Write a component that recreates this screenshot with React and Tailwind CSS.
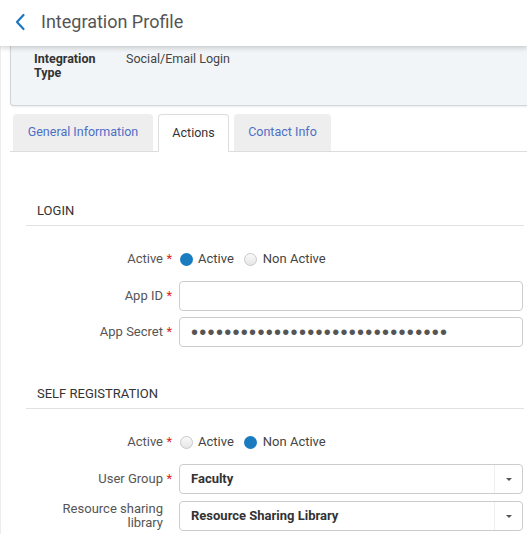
import React from "react";

function Label({ children, required }) {
  return (
    <div className="w-[146px] shrink-0 flex justify-end items-center text-right text-[13px] leading-[14px] text-[#555]">
      <span>{children}</span>
      <span className="w-[9px] pl-[3px] text-[#e0261b] text-[13px]">{required ? "*" : ""}</span>
    </div>
  );
}

function Radio({ checked }) {
  return checked ? (
    <span className="block w-[13px] h-[13px] rounded-full bg-[#1b7bbf] shrink-0" />
  ) : (
    <span className="block w-[13px] h-[13px] rounded-full border border-[#c8c8c8] bg-gradient-to-b from-[#fafafa] to-[#e6e6e6] shrink-0" />
  );
}

function RadioRow({ first, className }) {
  return (
    <div className={"flex h-[24px] items-center " + className}>
      <Label required>Active</Label>
      <div className="ml-[8px] flex items-center text-[13px] text-[#444]">
        <Radio checked={first} />
        <span className="ml-[5px]">Active</span>
        <span className="ml-[10px] flex"><Radio checked={!first} /></span>
        <span className="ml-[6px]">Non Active</span>
      </div>
    </div>
  );
}

function SectionHeading({ children, className }) {
  return (
    <div className={"pl-[11px] pb-[4px] border-b border-[#e2e2e2] text-[13px] leading-[20px] text-[#333] " + className}>
      {children}
    </div>
  );
}

function Select({ value }) {
  return (
    <div className="ml-[7px] w-[344px] h-[30px] border border-[#ccc] rounded-[4px] flex items-center">
      <span className="flex-1 pl-[11px] text-[13px] font-bold text-[#333]">{value}</span>
      <span className="w-[28px] h-full border-l border-[#eee] flex items-center justify-center">
        <span className="w-0 h-0 border-l-[3px] border-r-[3px] border-t-[3px] border-l-transparent border-r-transparent border-t-[#555]" />
      </span>
    </div>
  );
}

export default function App() {
  return (
    <div className="w-[527px] h-[534px] overflow-hidden bg-white relative" style={{ fontFamily: "Roboto, 'Liberation Sans', sans-serif" }}>
      <div className="relative z-10 h-[46px] bg-white shadow-[0_2px_5px_rgba(0,0,0,0.18)] flex items-center">
        <svg className="ml-[14px] -mt-[2px]" width="12" height="18" viewBox="0 0 12 18">
          <path d="M9.5 2 L3 9 L9.5 16" fill="none" stroke="#1d76c2" strokeWidth="2.2" strokeLinecap="round" strokeLinejoin="round" />
        </svg>
        <span className="ml-[15px] -mt-[2px] text-[18px] text-[#555] leading-[22px]">Integration Profile</span>
      </div>
      <div className="border-l border-[#ececec] h-[488px]">
        <div className="ml-[9px] h-[60px] bg-[#f2f5f7] border-l border-b border-[#d2d6d9] rounded-bl-[4px] shadow-[0_1px_2px_rgba(0,0,0,0.08)] flex pt-[6px] pl-[23px]">
          <div className="w-[92px] text-[12.5px] leading-[14px] font-bold text-[#333]">Integration<br />Type</div>
          <div className="text-[12.5px] leading-[14px] text-[#444]">Social/Email Login</div>
        </div>
        <div className="ml-[9px] mt-[8px] flex items-end border-b border-[#ddd] h-[38px] pl-[3px] gap-[5px]">
          <div className="w-[140px] h-[37px] bg-[#eeeeee] rounded-t-[4px] flex items-center justify-center text-[12.5px] text-[#4d6fc6]">General Information</div>
          <div className="w-[71px] h-[38px] -mb-px bg-white border border-b-0 border-[#ddd] rounded-t-[4px] flex items-center justify-center text-[12.5px] text-[#333]">Actions</div>
          <div className="w-[97px] h-[37px] bg-[#eeeeee] rounded-t-[4px] flex items-center justify-center text-[12.5px] text-[#4d6fc6]">Contact Info</div>
        </div>
        <div className="ml-[25px] pr-[3px]">
          <SectionHeading className="mt-[49px]">LOGIN</SectionHeading>
          <RadioRow first className="mt-[21px]" />
          <div className="mt-[10px] flex h-[30px] items-center">
            <Label required>App ID</Label>
            <div className="ml-[7px] w-[344px] h-[30px] border border-[#ccc] rounded-[4px]" />
          </div>
          <div className="mt-[6px] flex h-[30px] items-center">
            <Label required>App Secret</Label>
            <div className="ml-[7px] w-[344px] h-[30px] border border-[#ccc] rounded-[4px] flex items-center pl-[11px] overflow-hidden">
              <span className="text-[20px] leading-[20px] tracking-[1.3px] text-[#555]" style={{ fontFamily: "'Liberation Sans', sans-serif" }}>
                {"•".repeat(31)}
              </span>
            </div>
          </div>
          <SectionHeading className="mt-[37px]">SELF REGISTRATION</SectionHeading>
          <RadioRow first={false} className="mt-[21px]" />
          <div className="mt-[10px] flex h-[30px] items-center">
            <Label required>User Group</Label>
            <Select value="Faculty" />
          </div>
          <div className="mt-[7px] flex h-[30px] items-center">
            <Label>Resource sharing<br />library</Label>
            <Select value="Resource Sharing Library" />
          </div>
        </div>
      </div>
    </div>
  );
}
